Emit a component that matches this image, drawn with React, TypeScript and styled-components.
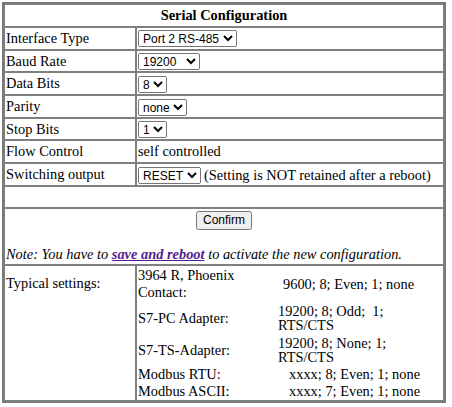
import React from 'react';
import styled, { createGlobalStyle } from 'styled-components';

const GlobalStyle = createGlobalStyle`
  html, body {
    margin: 0;
    padding: 0;
    background: #ffffff;
  }
  body {
    font-family: "Liberation Serif", "Times New Roman", serif;
    font-size: 14.4px;
    color: #000000;
  }
`;

const Page = styled.div`
  padding: 2px;
`;

const ConfigTable = styled.table`
  width: 444px;
  table-layout: fixed;
  border: 2px solid #7a7a7a;
  border-spacing: 0;
  border-collapse: separate;
`;

const Column = styled.col<{ $width?: number }>`
  width: ${({ $width }) => ($width ? `${$width}px` : 'auto')};
`;

const TitleCell = styled.th`
  border: 1px solid #808080;
  padding: 1px;
  height: 19px;
  font-weight: bold;
  text-align: center;
`;

const LabelCell = styled.td`
  border: 1px solid #808080;
  padding: 1px;
  height: 18.7px;
  white-space: nowrap;
  vertical-align: middle;
`;

const ValueCell = styled.td`
  border: 1px solid #808080;
  padding: 1px;
  height: 18.7px;
  white-space: nowrap;
  vertical-align: middle;
`;

const SpanCell = styled.td<{ $height?: number }>`
  border: 1px solid #808080;
  padding: 1px;
  height: ${({ $height }) => ($height ? `${$height}px` : 'auto')};
  vertical-align: top;
`;

const Select = styled.select`
  font-family: "Liberation Sans", Arial, sans-serif;
  font-size: 12px;
  height: 17px;
  vertical-align: middle;
`;

const Hint = styled.span`
  margin-left: 3px;
  vertical-align: middle;
`;

const ConfirmBar = styled.div`
  text-align: center;
  padding-top: 1px;
`;

const Button = styled.button`
  font-family: "Liberation Sans", Arial, sans-serif;
  font-size: 12px;
  height: 19px;
  padding: 0 5px;
`;

const Note = styled.div`
  font-style: italic;
  margin-top: 16px;
  white-space: nowrap;
`;

const Link = styled.a`
  color: #551a8b;
  font-weight: bold;
  text-decoration: underline;
`;

const TypicalLabel = styled.td`
  border: 1px solid #808080;
  padding: 9px 1px 1px;
  vertical-align: top;
`;

const TypicalCell = styled.td`
  border: 1px solid #808080;
  padding: 1px 4px 0 1px;
  vertical-align: top;
`;

const SettingRow = styled.div<{ $gap: number }>`
  display: grid;
  grid-template-columns: 133px 1fr;
  align-items: center;
  margin-top: ${({ $gap }) => $gap}px;
`;

const SettingName = styled.div`
  line-height: 17px;
`;

const SettingValue = styled.div<{ $indent: number }>`
  line-height: 14.5px;
  padding-left: ${({ $indent }) => $indent}px;
  white-space: nowrap;
`;

const settings = [
  { name: ['3964 R, Phoenix', 'Contact:'], value: ['9600; 8; Even; 1; none'], indent: 12, gap: 0 },
  { name: ['S7-PC Adapter:'], value: ['19200; 8; Odd;\u00a0 1;', 'RTS/CTS'], indent: 7, gap: 3 },
  { name: ['S7-TS-Adapter:'], value: ['19200; 8; None; 1;', 'RTS/CTS'], indent: 7, gap: 3 },
  { name: ['Modbus RTU:'], value: ['xxxx; 8; Even; 1; none'], indent: 18, gap: 1 },
  { name: ['Modbus ASCII:'], value: ['xxxx; 7; Even; 1; none'], indent: 18, gap: 0 },
];

const lines = (items: string[]) =>
  items.map((item, i) => (
    <React.Fragment key={i}>
      {i > 0 && <br />}
      {item}
    </React.Fragment>
  ));

export default function App() {
  return (
    <Page>
      <GlobalStyle />
      <ConfigTable>
        <colgroup>
          <Column $width={132} />
          <Column />
        </colgroup>
        <tbody>
          <tr>
            <TitleCell colSpan={2}>Serial Configuration</TitleCell>
          </tr>
          <tr>
            <LabelCell>Interface Type</LabelCell>
            <ValueCell>
              <Select defaultValue="2">
                <option value="1">Port 1 RS-232</option>
                <option value="2">Port 2 RS-485</option>
              </Select>
            </ValueCell>
          </tr>
          <tr>
            <LabelCell>Baud Rate</LabelCell>
            <ValueCell>
              <Select defaultValue="19200">
                <option>1200</option>
                <option>2400</option>
                <option>4800</option>
                <option>9600</option>
                <option>19200</option>
                <option>38400</option>
                <option>57600</option>
                <option>115200</option>
              </Select>
            </ValueCell>
          </tr>
          <tr>
            <LabelCell>Data Bits</LabelCell>
            <ValueCell>
              <Select defaultValue="8">
                <option>7</option>
                <option>8</option>
              </Select>
            </ValueCell>
          </tr>
          <tr>
            <LabelCell>Parity</LabelCell>
            <ValueCell>
              <Select defaultValue="none">
                <option>none</option>
                <option>even</option>
                <option>odd</option>
              </Select>
            </ValueCell>
          </tr>
          <tr>
            <LabelCell>Stop Bits</LabelCell>
            <ValueCell>
              <Select defaultValue="1">
                <option>1</option>
                <option>2</option>
              </Select>
            </ValueCell>
          </tr>
          <tr>
            <LabelCell>Flow Control</LabelCell>
            <ValueCell>self controlled</ValueCell>
          </tr>
          <tr>
            <LabelCell>Switching output</LabelCell>
            <ValueCell>
              <Select defaultValue="RESET">
                <option>RESET</option>
                <option>SET</option>
              </Select>
              <Hint>(Setting is NOT retained after a reboot)</Hint>
            </ValueCell>
          </tr>
          <tr>
            <SpanCell colSpan={2} $height={18}></SpanCell>
          </tr>
          <tr>
            <SpanCell colSpan={2}>
              <ConfirmBar>
                <Button type="button">Confirm</Button>
              </ConfirmBar>
              <Note>
                Note: You have to <Link href="#">save and reboot</Link> to activate the new
                configuration.
              </Note>
            </SpanCell>
          </tr>
          <tr>
            <TypicalLabel>Typical settings:</TypicalLabel>
            <TypicalCell>
              {settings.map((s, i) => (
                <SettingRow key={i} $gap={s.gap}>
                  <SettingName>{lines(s.name)}</SettingName>
                  <SettingValue $indent={s.indent}>{lines(s.value)}</SettingValue>
                </SettingRow>
              ))}
            </TypicalCell>
          </tr>
        </tbody>
      </ConfigTable>
    </Page>
  );
}
